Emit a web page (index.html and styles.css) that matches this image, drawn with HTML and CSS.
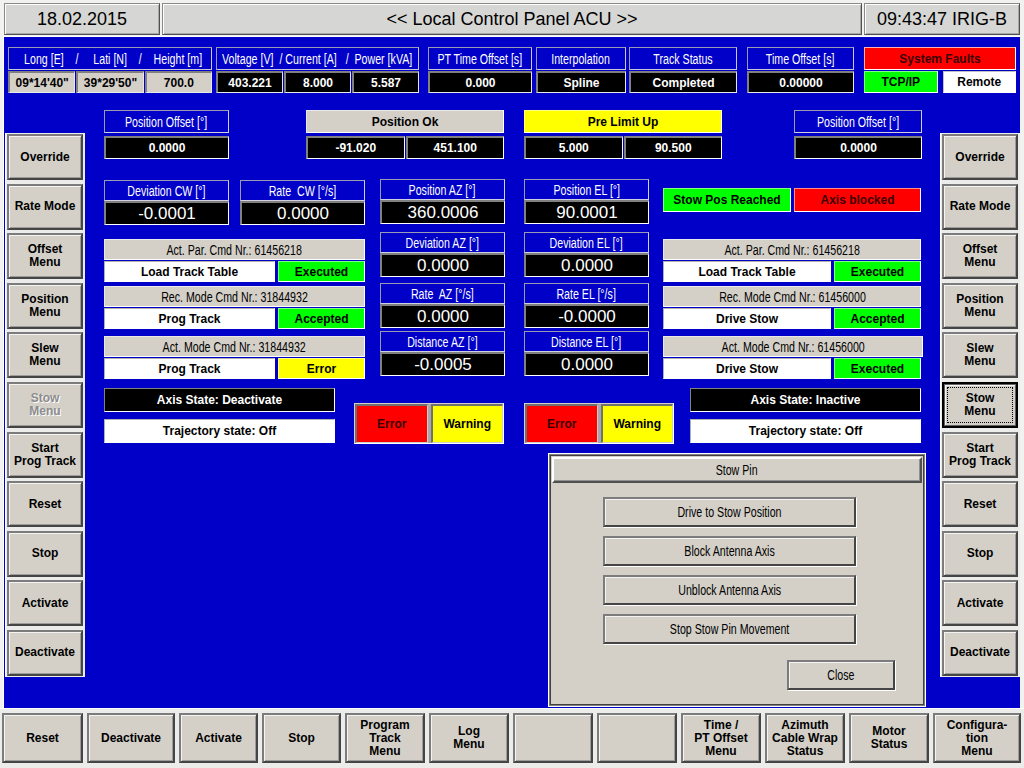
FILE: index.html
```html
<!DOCTYPE html>
<html>
<head>
<meta charset="utf-8">
<title>Local Control Panel ACU</title>
<link rel="stylesheet" href="styles.css">
</head>
<body>
<div class="screen">
  <header class="topbar">
    <div class="tb-cell tb-date">18.02.2015</div>
    <div class="tb-cell tb-title">&lt;&lt; Local Control Panel ACU &gt;&gt;</div>
    <div class="tb-cell tb-time">09:43:47 IRIG-B</div>
  </header>

  <main class="panel">
    <div class="status-row">
      <div class="sg sg-geo">
        <div class="lbl lbl-geo"><span class="t">Long [E]    /     Lati [N]    /    Height [m]</span></div>
        <div class="vals">
          <div class="val val-gray">09*14'40"</div>
          <div class="val val-gray">39*29'50"</div>
          <div class="val val-gray">700.0</div>
        </div>
      </div>
      <div class="sg sg-pow">
        <div class="lbl"><span class="t">Voltage [V]  / Current [A]   /  Power [kVA]</span></div>
        <div class="vals">
          <div class="val">403.221</div>
          <div class="val">8.000</div>
          <div class="val">5.587</div>
        </div>
      </div>
      <div class="sg sg-pt">
        <div class="lbl"><span class="t">PT Time Offset [s]</span></div>
        <div class="vals"><div class="val">0.000</div></div>
      </div>
      <div class="sg sg-int">
        <div class="lbl"><span class="t">Interpolation</span></div>
        <div class="vals"><div class="val">Spline</div></div>
      </div>
      <div class="sg sg-trk">
        <div class="lbl"><span class="t">Track Status</span></div>
        <div class="vals"><div class="val">Completed</div></div>
      </div>
      <div class="sg sg-tof">
        <div class="lbl"><span class="t">Time Offset [s]</span></div>
        <div class="vals"><div class="val">0.00000</div></div>
      </div>
      <div class="sg sg-sys">
        <div class="lbl lbl-fault">System Faults</div>
        <div class="vals vals-sys">
          <div class="val val-green">TCP/IP</div>
          <div class="val val-white">Remote</div>
        </div>
      </div>
    </div>

    <div class="body-row">
      <nav class="side side-left">
        <div class="btn">Override</div>
        <div class="btn">Rate Mode</div>
        <div class="btn">Offset<br>Menu</div>
        <div class="btn">Position<br>Menu</div>
        <div class="btn">Slew<br>Menu</div>
        <div class="btn btn-disabled">Stow<br>Menu</div>
        <div class="btn">Start<br>Prog Track</div>
        <div class="btn">Reset</div>
        <div class="btn">Stop</div>
        <div class="btn">Activate</div>
        <div class="btn">Deactivate</div>
      </nav>

      <section class="center">
        <div class="row-a">
          <div class="fld fld-po">
            <div class="flbl"><span class="t">Position Offset [°]</span></div>
            <div class="fvals"><div class="fval">0.0000</div></div>
          </div>
          <div class="fld fld-ok">
            <div class="flbl flbl-gray">Position Ok</div>
            <div class="fvals"><div class="fval">-91.020</div><div class="fval">451.100</div></div>
          </div>
          <div class="fld fld-pl">
            <div class="flbl flbl-yellow">Pre Limit Up</div>
            <div class="fvals"><div class="fval">5.000</div><div class="fval">90.500</div></div>
          </div>
          <div class="fld fld-po2">
            <div class="flbl"><span class="t">Position Offset [°]</span></div>
            <div class="fvals"><div class="fval">0.0000</div></div>
          </div>
        </div>

        <div class="row-mid">
          <div class="col-l">
            <div class="pair">
              <div class="big"><div class="blbl"><span class="t">Deviation CW [°]</span></div><div class="bval">-0.0001</div></div>
              <div class="big"><div class="blbl"><span class="t">Rate  CW [°/s]</span></div><div class="bval">0.0000</div></div>
            </div>
            <div class="cmds">
              <div class="cmd">
                <div class="cmd-h"><span class="t">Act. Par. Cmd Nr.: 61456218</span></div>
                <div class="cmd-row"><div class="cmd-name">Load Track Table</div><div class="cmd-st st-green">Executed</div></div>
              </div>
              <div class="cmd cmd-2">
                <div class="cmd-h"><span class="t">Rec. Mode Cmd Nr.: 31844932</span></div>
                <div class="cmd-row"><div class="cmd-name">Prog Track</div><div class="cmd-st st-green">Accepted</div></div>
              </div>
              <div class="cmd cmd-3">
                <div class="cmd-h"><span class="t">Act. Mode Cmd Nr.: 31844932</span></div>
                <div class="cmd-row"><div class="cmd-name">Prog Track</div><div class="cmd-st st-yellow">Error</div></div>
              </div>
            </div>
          </div>

          <div class="col-ax col-az">
            <div class="big"><div class="blbl"><span class="t">Position AZ [°]</span></div><div class="bval">360.0006</div></div>
            <div class="big big-2"><div class="blbl"><span class="t">Deviation AZ [°]</span></div><div class="bval">0.0000</div></div>
            <div class="big big-3"><div class="blbl"><span class="t">Rate  AZ [°/s]</span></div><div class="bval">0.0000</div></div>
            <div class="big big-4"><div class="blbl"><span class="t">Distance AZ [°]</span></div><div class="bval">-0.0005</div></div>
          </div>

          <div class="col-ax col-el">
            <div class="big"><div class="blbl"><span class="t">Position EL [°]</span></div><div class="bval">90.0001</div></div>
            <div class="big big-2"><div class="blbl"><span class="t">Deviation EL [°]</span></div><div class="bval">0.0000</div></div>
            <div class="big big-3"><div class="blbl"><span class="t">Rate EL [°/s]</span></div><div class="bval">-0.0000</div></div>
            <div class="big big-4"><div class="blbl"><span class="t">Distance EL [°]</span></div><div class="bval">0.0000</div></div>
          </div>

          <div class="col-r">
            <div class="flags">
              <div class="flag flag-green">Stow Pos Reached</div>
              <div class="flag flag-red">Axis blocked</div>
            </div>
            <div class="cmds cmds-r">
              <div class="cmd">
                <div class="cmd-h"><span class="t">Act. Par. Cmd Nr.: 61456218</span></div>
                <div class="cmd-row"><div class="cmd-name">Load Track Table</div><div class="cmd-st st-green">Executed</div></div>
              </div>
              <div class="cmd cmd-2">
                <div class="cmd-h"><span class="t">Rec. Mode Cmd Nr.: 61456000</span></div>
                <div class="cmd-row"><div class="cmd-name">Drive Stow</div><div class="cmd-st st-green">Accepted</div></div>
              </div>
              <div class="cmd cmd-3">
                <div class="cmd-h cmd-h-wide"><span class="t">Act. Mode Cmd Nr.: 61456000</span></div>
                <div class="cmd-row"><div class="cmd-name">Drive Stow</div><div class="cmd-st st-green">Executed</div></div>
              </div>
            </div>
          </div>
        </div>

        <div class="row-d">
          <div class="axis">
            <div class="axis-state">Axis State: Deactivate</div>
            <div class="traj">Trajectory state: Off</div>
          </div>
          <div class="errbox errbox-l">
            <div class="eb eb-red">Error</div>
            <div class="eb eb-yellow">Warning</div>
          </div>
          <div class="errbox errbox-r">
            <div class="eb eb-red">Error</div>
            <div class="eb eb-yellow">Warning</div>
          </div>
          <div class="axis axis-r">
            <div class="axis-state">Axis State: Inactive</div>
            <div class="traj">Trajectory state: Off</div>
          </div>
        </div>
      </section>

      <nav class="side side-right">
        <div class="btn">Override</div>
        <div class="btn">Rate Mode</div>
        <div class="btn">Offset<br>Menu</div>
        <div class="btn">Position<br>Menu</div>
        <div class="btn">Slew<br>Menu</div>
        <div class="btn btn-focus">Stow<br>Menu</div>
        <div class="btn">Start<br>Prog Track</div>
        <div class="btn">Reset</div>
        <div class="btn">Stop</div>
        <div class="btn">Activate</div>
        <div class="btn">Deactivate</div>
      </nav>
    </div>

    <div class="dialog">
      <div class="dlg-title"><span class="t">Stow Pin</span></div>
      <div class="dlg-body">
        <div class="dlg-btn"><span class="t">Drive to Stow Position</span></div>
        <div class="dlg-btn"><span class="t">Block Antenna Axis</span></div>
        <div class="dlg-btn"><span class="t">Unblock Antenna Axis</span></div>
        <div class="dlg-btn"><span class="t">Stop Stow Pin Movement</span></div>
        <div class="dlg-btn dlg-close"><span class="t">Close</span></div>
      </div>
    </div>
  </main>

  <footer class="bottombar">
    <div class="btn">Reset</div>
    <div class="btn">Deactivate</div>
    <div class="btn">Activate</div>
    <div class="btn">Stop</div>
    <div class="btn">Program<br>Track<br>Menu</div>
    <div class="btn">Log<br>Menu</div>
    <div class="btn"></div>
    <div class="btn"></div>
    <div class="btn">Time /<br>PT Offset<br>Menu</div>
    <div class="btn">Azimuth<br>Cable Wrap<br>Status</div>
    <div class="btn">Motor<br>Status</div>
    <div class="btn">Configura-<br>tion<br>Menu</div>
  </footer>
</div>
</body>
</html>
```

FILE: styles.css
```css
* { box-sizing: border-box; }
html, body { margin: 0; padding: 0; }
body {
  width: 1024px;
  height: 768px;
  overflow: hidden;
  background: #f2f2f0;
  font-family: "Liberation Sans", Arial, sans-serif;
  font-size: 12px;
  color: #000;
}
.screen { width: 1024px; height: 768px; display: flex; flex-direction: column; }

/* narrow (condensed) label text */
.t {
  display: inline-block;
  white-space: pre;
  transform: scaleX(0.76);
}

/* ---------- top bar ---------- */
.topbar {
  display: flex;
  gap: 2px;
  height: 36px;
  padding: 3px 4px 1px 4px;
  background: #f2f2f0;
}
.tb-cell {
  height: 32px;
  background: #d6d6d4;
  border: 1px solid;
  border-color: #8a8a8a #505050 #505050 #8a8a8a;
  box-shadow: inset 1px 1px 0 #ffffff, inset -1px -1px 0 #a8a8a8;
  display: flex;
  align-items: center;
  justify-content: center;
  font-size: 18px;
}
.tb-date, .tb-time { width: 156px; }
.tb-title { flex: 1; }

/* ---------- blue panel ---------- */
.panel {
  position: relative;
  height: 672px;
  margin: 0 4px 0 3px;
  background: #0000c8;
  border-top: 1px solid #ffffff;
  border-left: 1px solid #ffffff;
}

/* status row */
.status-row { display: flex; margin: 10px 0 0 4px; height: 46px; }
.sg { display: flex; flex-direction: column; gap: 1px; }
.sg-geo { width: 204px; }
.sg-pow { width: 203px; margin-left: 4px; }
.sg-pt  { width: 104px; margin-left: 9px; }
.sg-int { width: 90px;  margin-left: 4px; }
.sg-trk { width: 108px; margin-left: 3px; }
.sg-tof { width: 107px; margin-left: 10px; }
.sg-sys { width: 152px; margin-left: 10px; }

.lbl, .flbl, .blbl, .cmd-h, .dlg-title, .dlg-btn {
  font-size: 14px;
}
.lbl {
  height: 23px;
  border: 1px solid;
  border-color: #9a9ab4 #c8c8d8 #c8c8d8 #9a9ab4;
  color: #ffffff;
  display: flex;
  align-items: center;
  justify-content: center;
  white-space: nowrap;
}
.lbl-geo { padding-left: 6px; }
.lbl-fault {
  background: #ff0000;
  border-color: #ffb0b0 #ffffff #ffffff #ffb0b0;
  color: #3a0000;
  font-weight: bold;
  font-size: 12px;
}

.vals { display: flex; gap: 1px; height: 22px; }
.vals-sys { gap: 5px; }
.val {
  flex: 1;
  background: #000000;
  color: #ffffff;
  font-weight: bold;
  font-size: 12px;
  border-style: solid;
  border-width: 2px 1px 1px 2px;
  border-color: #808080 #e8e8e8 #e8e8e8 #808080;
  display: flex;
  align-items: center;
  justify-content: center;
  white-space: nowrap;
}
.val-gray { background: #d4d0c8; color: #000000; }
.val-green { background: #00ff00; color: #000000; border-width: 1px; border-color: #80ff80 #ffffff #ffffff #80ff80; }
.val-white { background: #ffffff; color: #000000; border-width: 1px; border-color: #c0c0c0 #ffffff #ffffff #c0c0c0; }

/* ---------- body row ---------- */
.body-row { display: flex; align-items: flex-start; }

.side {
  width: 80px;
  margin-top: 40px;
  height: 544px;
  background: #ececea;
  border-left: 1px solid #ffffff;
  padding: 1px 2px 1px 1px;
  display: grid;
  grid-template-rows: repeat(11, 46px);
  row-gap: 3.6px;
}
.side-left { margin-left: 1px; }
.side-right { padding-left: 1px; }

.btn {
  position: relative;
  background: #d4d0c8;
  border: 2px solid;
  border-color: #7c7c7c #454545 #454545 #7c7c7c;
  box-shadow: inset 1px 1px 0 #f4f4f4, inset -1px -1px 0 #9c9c9c;
  display: flex;
  align-items: center;
  justify-content: center;
  text-align: center;
  font-weight: bold;
  font-size: 12px;
  line-height: 13px;
  white-space: nowrap;
}
.btn-disabled { color: #8c8c8c; text-shadow: 1px 1px 0 #ffffff; }
.btn-focus {
  border-color: #000000;
  box-shadow: inset 0 0 0 1px #606060, inset 2px 2px 0 #f4f4f4;
}
.btn-focus::after {
  content: "";
  position: absolute;
  inset: 3px;
  border: 1px dotted #000000;
}

/* ---------- center ---------- */
.center { width: 855px; padding: 17px 0 0 19px; }

.row-a { display: flex; }
.fld { display: flex; flex-direction: column; gap: 3px; }
.fld-po  { width: 125px; }
.fld-ok  { width: 198px; margin-left: 77px; }
.fld-pl  { width: 198px; margin-left: 20px; }
.fld-po2 { width: 128px; margin-left: 72px; }

.flbl {
  height: 23px;
  border: 1px solid;
  border-color: #9a9ab4 #d0d0e0 #d0d0e0 #9a9ab4;
  color: #ffffff;
  display: flex;
  align-items: center;
  justify-content: center;
  white-space: nowrap;
}
.flbl-gray, .flbl-yellow {
  font-size: 12px;
  font-weight: bold;
  color: #000000;
}
.flbl-gray { background: #d4d0c8; border-color: #e8e8e8 #ffffff #ffffff #e8e8e8; }
.flbl-yellow { background: #ffff00; border-color: #ffff80 #ffffff #ffffff #ffff80; }

.fvals { display: flex; gap: 1px; height: 23px; }
.fval {
  flex: 1;
  background: #000000;
  color: #ffffff;
  font-weight: bold;
  font-size: 12px;
  border-style: solid;
  border-width: 2px 1px 1px 2px;
  border-color: #808080 #ffffff #ffffff #808080;
  display: flex;
  align-items: center;
  justify-content: center;
}

.row-mid { display: flex; align-items: flex-start; margin-top: 20px; }

.big { width: 125px; display: flex; flex-direction: column; }
.blbl {
  height: 21px;
  border: 1px solid;
  border-color: #9a9ab4 #d0d0e0 #d0d0e0 #9a9ab4;
  color: #ffffff;
  display: flex;
  align-items: center;
  justify-content: center;
  white-space: nowrap;
}
.bval {
  height: 24px;
  background: #000000;
  color: #ffffff;
  font-size: 17px;
  border-style: solid;
  border-width: 2px 1px 1px 2px;
  border-color: #808080 #ffffff #ffffff #808080;
  display: flex;
  align-items: center;
  justify-content: center;
}

.col-l { width: 261px; }
.pair { display: flex; gap: 11px; margin-top: 1px; }
.cmds { margin-top: 14px; }
.cmds-r { margin-top: 27px; }

.col-ax { width: 125px; }
.col-az { margin-left: 15px; }
.col-el { margin-left: 19px; }
.big-2 { margin-top: 8px; }
.big-3 { margin-top: 6px; }
.big-4 { margin-top: 3px; }

.col-r { width: 258px; margin-left: 14px; }
.flags { display: flex; gap: 3px; margin-top: 9px; height: 24px; }
.flag {
  border: 1px solid;
  font-weight: bold;
  font-size: 12px;
  display: flex;
  align-items: center;
  justify-content: center;
}
.flag-green { width: 128px; background: #00ff00; border-color: #80ff80 #ffffff #ffffff #80ff80; }
.flag-red { width: 127px; background: #ff0000; color: #3a0000; border-color: #ff9090 #ffffff #ffffff #ff9090; }

.cmd { display: flex; flex-direction: column; gap: 1px; }
.cmd-2 { margin-top: 4px; }
.cmd-3 { margin-top: 7px; }
.cmd-h {
  height: 21px;
  background: #d4d0c8;
  border: 1px solid;
  border-color: #e8e8e8 #ffffff #ffffff #e8e8e8;
  display: flex;
  align-items: center;
  justify-content: center;
  white-space: nowrap;
}
.cmd-h-wide { width: 260px; }
.cmd-row { display: flex; gap: 3px; height: 21px; }
.cmd-name, .cmd-st {
  border: 1px solid;
  font-weight: bold;
  font-size: 12px;
  display: flex;
  align-items: center;
  justify-content: center;
}
.cmd-name { flex: 1; background: #ffffff; border-color: #b0b0b0 #ffffff #ffffff #b0b0b0; }
.cmd-st { width: 87px; }
.st-green { background: #00ff00; border-color: #80ff80 #ffffff #ffffff #80ff80; }
.st-yellow { background: #ffff00; border-color: #ffff80 #ffffff #ffffff #ffff80; }

.row-d { display: flex; align-items: flex-start; margin-top: 9px; }
.axis { width: 231px; display: flex; flex-direction: column; gap: 7px; }
.axis-r { margin-left: 16px; }
.axis-state, .traj {
  height: 24px;
  border: 1px solid;
  font-weight: bold;
  font-size: 12px;
  display: flex;
  align-items: center;
  justify-content: center;
}
.axis-state { background: #000000; color: #ffffff; border-color: #808080 #ffffff #ffffff #808080; }
.traj { background: #ffffff; border-color: #b0b0b0 #ffffff #ffffff #b0b0b0; }

.errbox {
  width: 150px;
  height: 41px;
  margin-top: 15px;
  display: flex;
  gap: 3px;
  background: #a8a8a8;
  border: 1px solid;
  border-color: #d4d0c8 #ffffff #ffffff #d4d0c8;
}
.errbox-l { margin-left: 19px; }
.errbox-r { margin-left: 20px; }
.eb {
  flex: 1;
  border-style: solid;
  border-width: 2px 1px 1px 2px;
  border-color: #707070 #d4d0c8 #d4d0c8 #707070;
  font-weight: bold;
  font-size: 12px;
  display: flex;
  align-items: center;
  justify-content: center;
}
.eb-red { background: #ff0000; color: #3a0000; }
.eb-yellow { background: #ffff00; }

/* ---------- dialog ---------- */
.dialog {
  position: absolute;
  left: 544px;
  top: 416px;
  width: 378px;
  height: 254px;
  background: #d4d0c8;
  border: 1px solid #ffffff;
  box-shadow: inset 0 0 0 1px #808080, inset 0 0 0 2px #404040;
  padding: 3px;
}
.dlg-title {
  height: 26px;
  border: 2px solid;
  border-color: #ffffff #505050 #505050 #ffffff;
  box-shadow: inset -1px -1px 0 #909090;
  display: flex;
  align-items: center;
  justify-content: center;
}
.dlg-body {
  display: flex;
  flex-direction: column;
  align-items: flex-start;
  padding: 14px 0 0 51px;
  gap: 9px;
}
.dlg-btn {
  width: 253px;
  height: 30px;
  background: #d4d0c8;
  border: 2px solid;
  border-color: #7c7c7c #454545 #454545 #7c7c7c;
  box-shadow: 1px 1px 0 #ffffff, inset 1px 1px 0 #f4f4f4;
  display: flex;
  align-items: center;
  justify-content: center;
  white-space: nowrap;
}
.dlg-close { width: 108px; margin: 7px 0 0 184px; }

/* ---------- bottom bar ---------- */
.bottombar {
  height: 60px;
  padding: 4px 0 5px 2px;
  background: #ececea;
  border-top: 1px solid #ffffff;
  display: grid;
  grid-template-columns: 81px 88px 79px 79px repeat(7, 80px) 88px;
  column-gap: 4px;
}
```
